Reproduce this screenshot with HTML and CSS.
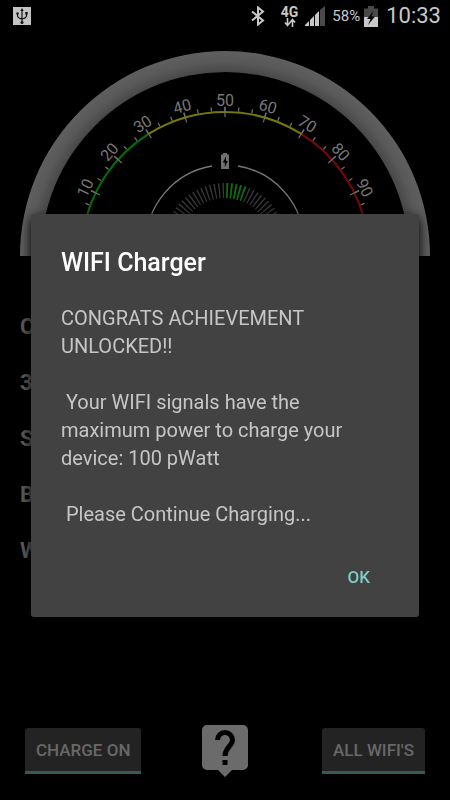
FILE: index.html
```
<!DOCTYPE html>
<html lang="en">
<head>
<meta charset="utf-8">
<meta name="viewport" content="width=device-width, initial-scale=1">
<title>WIFI Charger</title>
<link rel="stylesheet" href="styles.css">
</head>
<body>
<div class="screen">
  <header class="status">
    <svg class="usb" width="18" height="18" viewBox="0 0 18 18" aria-hidden="true">
      <rect width="18" height="18" fill="#c4c4c4"/>
      <g fill="none" stroke="#111" stroke-width="1.2"><path d="M9 3v12M4.500 6.500v2q0 2.500 4.500 3.500M13.500 6v2.500q0 2.500-4.500 3.500"/></g>
      <path d="M9 1l1.700 3H7.300z" fill="#111"/><circle cx="9" cy="15.500" r="1.500" fill="#111"/><circle cx="4.500" cy="6.500" r="1.200" fill="#111"/><rect x="12.300" y="5" width="2.400" height="2.400" fill="#111"/>
    </svg>
    <span class="status-icons">
      <svg class="bluetooth" width="14" height="20" viewBox="0 0 14 20" fill="none" stroke="#c8c8c8" stroke-width="2" aria-hidden="true"><path d="M1 5.500l11 9-5 4V1.500l5 4-11 9"/></svg>
      <span class="network"><b>4G</b>
        <svg width="12" height="9" viewBox="0 0 12 9" fill="none" stroke="#c8c8c8" stroke-width="1.600" aria-hidden="true"><path d="M3.500 0v7M1 4.500l2.500 3 2.500-3M8.500 9V2M6 4.500l2.500-3 2.500 3"/></svg>
      </span>
      <svg class="signal" width="20" height="20" viewBox="0 0 20 20" fill="#c8c8c8" aria-hidden="true"><path d="M0 20v-1l4-4v5zM5 20v-6l4-4v10zM10 20V9l4-4v15z"/><path d="M15 20V4l5-4v20z" fill="#4a4a4a"/></svg>
      <span class="percent">58%</span>
      <svg class="battery" width="14" height="21" viewBox="0 0 14 21" aria-hidden="true"><path d="M4 0h6v2.500h4V12H0V2.500h4z" fill="#484848"/><path d="M0 11h14v10H0z" fill="#c8c8c8"/><path d="M9.500 5L3 13h3.500L4 19l7-8.500H7.500z" fill="#050505"/></svg>
      <time class="clock">10:33</time>
    </span>
  </header>

  <main class="content">
    <svg class="gauge" viewBox="0 0 410 205" role="img" aria-label="Signal gauge">
      <defs>
        <radialGradient id="rim" gradientUnits="userSpaceOnUse" cx="205" cy="205" r="205">
          <stop offset=".9" stop-color="#494949"/><stop offset=".95" stop-color="#595959"/><stop offset="1" stop-color="#5f5f5f"/>
        </radialGradient>
        <path id="major" d="M205 56v10"/>
      </defs>
      <path fill="url(#rim)" d="M0 205a205 205 0 0 1 410 0h-21a184 184 0 0 0-368 0z"/>
      <g fill="none" stroke-width="2">
        <path stroke="#066f06" d="M63.200 180A144 144 0 0 1 128.700 82.900"/>
        <path stroke="#77770a" d="M128.700 82.900A144 144 0 0 1 281.300 82.900"/>
        <path stroke="#7a0808" d="M281.300 82.900A144 144 0 0 1 346.800 180"/>
      </g>
      <path fill="none" stroke="#707070" stroke-width="4" pathLength="160" stroke-dasharray=".5 4.833" stroke-dashoffset=".25" d="M60.200 179.500A147 147 0 0 1 349.800 179.500"/>
      <g stroke="#707070" stroke-width="1.200">
        <use href="#major" transform="rotate(-64 205 205)"/><use href="#major" transform="rotate(-48 205 205)"/>
        <use href="#major" transform="rotate(-32 205 205)"/><use href="#major" transform="rotate(-16 205 205)"/>
        <use href="#major"/>
        <use href="#major" transform="rotate(16 205 205)"/><use href="#major" transform="rotate(32 205 205)"/>
        <use href="#major" transform="rotate(48 205 205)"/><use href="#major" transform="rotate(64 205 205)"/>
      </g>
      <g class="scale">
        <text x="205" y="55" transform="rotate(-64 205 205)">10</text>
        <text x="205" y="55" transform="rotate(-48 205 205)">20</text>
        <text x="205" y="55" transform="rotate(-32 205 205)">30</text>
        <text x="205" y="55" transform="rotate(-16 205 205)">40</text>
        <text x="205" y="55">50</text>
        <text x="205" y="55" transform="rotate(16 205 205)">60</text>
        <text x="205" y="55" transform="rotate(32 205 205)">70</text>
        <text x="205" y="55" transform="rotate(48 205 205)">80</text>
        <text x="205" y="55" transform="rotate(64 205 205)">90</text>
      </g>
      <path fill="none" stroke="#777" stroke-width="1.400" d="M192 115A79 79 0 0 0 126 193M218 115A79 79 0 0 1 284 193"/>
      <path fill="#707070" d="M203 102h4v1.500h2V118h-8v-14.500h2z"/><path fill="#000" d="M206 105.500l-3.200 6h2v4.500l3.200-6h-2z"/>
      <g fill="none" stroke-width="15">
        <path stroke="#383838" d="M151.500 193A53.500 53.500 0 0 1 258.500 193" pathLength="180" stroke-dasharray="1.400 2.900" stroke-dashoffset="2.800"/>
        <path stroke="#067306" d="M205 139.500A53.500 53.500 0 0 1 224.600 143.200" pathLength="21.500" stroke-dasharray="1.700 2.600" stroke-dashoffset="2.900"/>
      </g>
    </svg>
    <ul class="readings"><li>C</li><li>3</li><li>S</li><li>B</li><li>W</li></ul>
  </main>

  <footer class="actions">
    <button class="action" type="button">CHARGE ON</button>
    <button class="help" type="button" aria-label="Help">
      <svg width="46" height="52" viewBox="0 0 46 52" aria-hidden="true"><path fill="#6b6b6b" d="M5 0h36a5 5 0 0 1 5 5v35a5 5 0 0 1-5 5H30l-7 7-7-7H5a5 5 0 0 1-5-5V5a5 5 0 0 1 5-5z"/><path fill="none" stroke="#000" stroke-width="5" d="M15.500 15a7.500 7.500 0 0 1 15 0c0 6-7.500 7-7.500 16"/><path d="M20.500 35h5v5h-5z"/></svg>
    </button>
    <button class="action" type="button">ALL WIFI'S</button>
  </footer>
</div>

<div class="overlay">
  <section class="dialog" role="dialog" aria-modal="true" aria-labelledby="dialog-title">
    <h1 id="dialog-title">WIFI Charger</h1>
    <p class="message">CONGRATS ACHIEVEMENT UNLOCKED!!

 Your WIFI signals have the maximum power to charge your device: 100 pWatt

 Please Continue Charging...</p>
    <div class="dialog-actions"><button class="ok" type="button">OK</button></div>
  </section>
</div>
</body>
</html>
```
FILE: styles.css
```
* { box-sizing: border-box; }
body { margin: 0; background: #000; font-family: Roboto, "Liberation Sans", sans-serif; }
button { font: inherit; border: 0; background: none; padding: 0; cursor: pointer; }

.screen { min-height: 100vh; display: flex; flex-direction: column; }

.status { height: 32px; padding: 0 9px 0 13px; display: flex; align-items: center; justify-content: space-between; color: #c8c8c8; }
.status-icons { display: flex; align-items: center; }
.network { display: flex; flex-direction: column; align-items: center; margin-left: 16px; font-size: 14px; line-height: 12px; }
.signal { margin-left: 7px; }
.percent { margin-left: 7px; font-size: 15px; }
.battery { margin-left: 4px; }
.clock { margin-left: 8px; font-size: 22px; line-height: 34px; }

.content { flex: 1; padding: 19px 20px 0; }
.gauge { display: block; width: 100%; }
.scale { font-size: 16px; fill: #777; text-anchor: middle; }
.readings { list-style: none; margin: 0; padding: 43px 0 0; color: #5c5c5c; font-size: 22px; font-weight: 700; line-height: 56px; }

.actions { display: grid; grid-template-columns: 1fr auto 1fr; align-items: center; justify-items: start; padding: 0 25px 23px; }
.action { height: 46px; padding: 0 11px; background: #232323; border-bottom: 3px solid #345b56; border-radius: 3px 3px 0 0; color: #686868; font-size: 17px; font-weight: 500; }
.action:last-child { justify-self: end; }
.help svg { display: block; }

.overlay { position: fixed; inset: 31px 0 0; display: flex; align-items: center; padding: 0 31px; }
.dialog { width: 100%; padding: 33px 30px 20px; background: #424242; border-radius: 3px; box-shadow: 0 4px 12px #000; }
.dialog h1 { margin: 0; color: #fff; font-size: 25px; font-weight: 500; line-height: 32px; }
.message { margin: 25px 0 0; color: #c6c6c6; font-size: 20px; line-height: 28px; white-space: pre-wrap; }
.dialog-actions { display: flex; justify-content: flex-end; margin-top: 29px; }
.ok { padding: 0 19px; color: #80cbc4; font-size: 17px; font-weight: 500; line-height: 40px; }
```
